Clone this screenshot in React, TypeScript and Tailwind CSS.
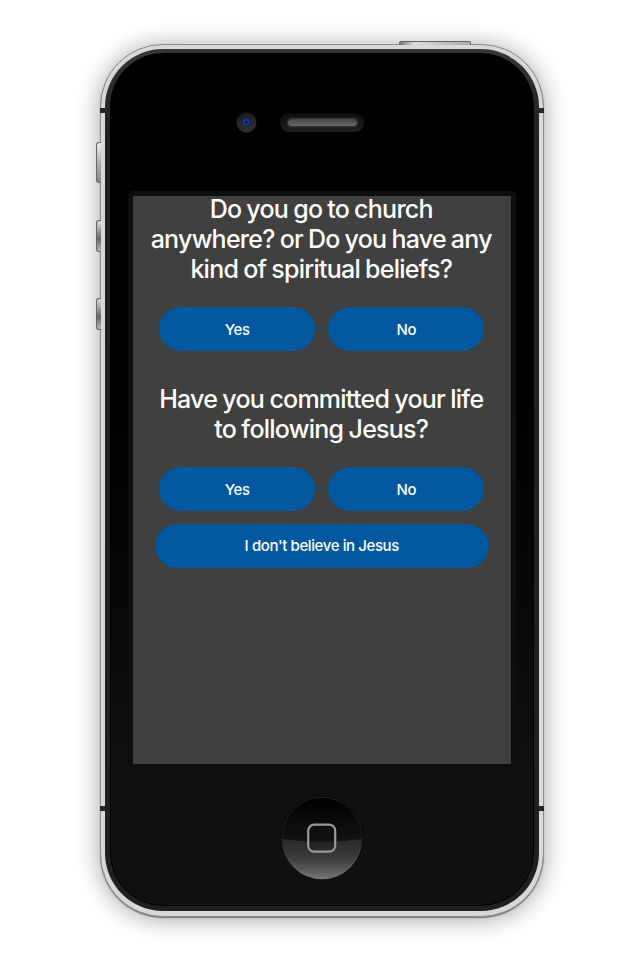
import type { ReactNode } from "react";

function PillButton({ children, className = "" }: { children: ReactNode; className?: string }) {
  return (
    <button
      className={`flex h-[44px] items-center justify-center rounded-full bg-[#00589f] pt-[2px] text-[15px] font-[450] tracking-[-0.4px] text-white ${className}`}
    >
      {children}
    </button>
  );
}

function Camera() {
  return (
    <svg className="mt-[-3px] size-[21px]" viewBox="0 0 21 21">
      <defs>
        <linearGradient id="lens" x1="0" y1="0" x2="0" y2="1">
          <stop offset="0" stopColor="#1b1c20" />
          <stop offset="1" stopColor="#303137" />
        </linearGradient>
        <radialGradient id="iris">
          <stop offset="0" stopColor="#0b3c93" />
          <stop offset="0.5" stopColor="#122a5a" />
          <stop offset="1" stopColor="#22252e" />
        </radialGradient>
      </defs>
      <circle cx="10.5" cy="10.5" r="10" fill="url(#lens)" />
      <circle cx="10" cy="10" r="5" fill="url(#iris)" />
      <circle cx="10" cy="10" r="2.6" fill="none" stroke="#0d3f8f" strokeWidth="1.2" />
      <circle cx="10" cy="10" r="1.1" fill="#050d20" />
      <circle cx="8.7" cy="8.8" r="0.6" fill="#2864b9" />
    </svg>
  );
}

function Speaker() {
  return (
    <div className="mt-[-2px] flex h-[19px] w-[84px] items-center justify-center rounded-full bg-linear-to-b from-[#0d0d0d] to-[#202020]">
      <div className="h-[7px] w-[69px] rounded-full bg-linear-to-b from-[#444] to-[#686868] shadow-[0_0_2px_1px_#3c3c3c]" />
    </div>
  );
}

function HomeButton() {
  return (
    <svg className="size-[84px]" viewBox="0 0 84 84">
      <defs>
        <linearGradient id="gloss" x1="0" y1="0" x2="0" y2="1">
          <stop offset="0" stopColor="#282828" />
          <stop offset="0.5" stopColor="#3d3d3d" />
          <stop offset="1" stopColor="#747474" />
        </linearGradient>
        <linearGradient id="dome" x1="0" y1="0" x2="0" y2="1">
          <stop offset="0" stopColor="#000" />
          <stop offset="0.6" stopColor="#141414" />
        </linearGradient>
        <linearGradient id="ring" x1="0" y1="0" x2="0" y2="1">
          <stop offset="0" stopColor="#2c2c2c" />
          <stop offset="0.5" stopColor="#222" />
          <stop offset="1" stopColor="#757575" />
        </linearGradient>
      </defs>
      <circle cx="42" cy="41.5" r="41.5" fill="#060606" />
      <circle cx="42" cy="41.5" r="40.2" fill="url(#dome)" />
      <path d="M1.8 43Q42 49 82.2 43A40.2 40.2 0 0 1 1.8 43Z" fill="url(#gloss)" />
      <circle cx="42" cy="41.5" r="40.2" fill="none" stroke="url(#ring)" strokeWidth="0.8" />
      <rect x="28.2" y="28.7" width="27" height="27" rx="6" fill="#101010" fillOpacity="0.3" stroke="#9a9a9a" strokeWidth="2.2" />
    </svg>
  );
}

function SideKey({ className }: { className: string }) {
  return (
    <div
      className={`absolute left-[-5px] w-[5px] rounded-l-[3px] border border-r-0 border-[#666] ${className}`}
    />
  );
}

function Screen() {
  return (
    <div className="flex h-[567.5px] w-[378px] flex-col items-center border border-[#3b3b3b] bg-[#404040] text-center text-white">
      <h1 className="mt-[-3px] mr-px text-[25px] leading-[30px] font-[450] tracking-[-0.75px] [word-spacing:-0.9px] whitespace-nowrap">
        Do you go to church
        <br />
        anywhere? or Do you have any
        <br />
        kind of spiritual beliefs?
      </h1>
      <div className="mt-[23px] flex gap-[13px]">
        <PillButton className="w-[156px]">Yes</PillButton>
        <PillButton className="w-[156px]">No</PillButton>
      </div>
      <h2 className="mt-[32.5px] mr-px text-[25px] leading-[30px] font-[450] tracking-[-0.75px] [word-spacing:-0.7px] whitespace-nowrap">
        Have you committed your life
        <br />
        to following Jesus?
      </h2>
      <div className="mt-[23.5px] flex gap-[13px]">
        <PillButton className="w-[156px]">Yes</PillButton>
        <PillButton className="w-[156px]">No</PillButton>
      </div>
      <PillButton className="mt-[12.5px] w-[334px]">I don't believe in Jesus</PillButton>
    </div>
  );
}

export default function App() {
  return (
    <main className="h-[960px] w-[640px] overflow-hidden bg-white pt-[44px] pl-[100px] font-['Inter','Liberation_Sans',sans-serif]">
      <div className="relative h-[873px] w-[443.5px] rounded-[63px] border border-[#8c8c8c] bg-[#d8d8d6] px-[4px] pt-[4px] pb-[5px] shadow-[0_1px_1px_#777,0_2px_24px_rgba(0,0,0,0.36)]">
        <div className="absolute top-[-4px] left-[298px] h-[4px] w-[72px] rounded-t-[2px] border border-b-0 border-[#666] bg-linear-to-r from-[#777] via-[#ddd] via-20% to-[#aaa]" />
        <SideKey className="top-[97px] h-[41px] bg-linear-to-b from-[#eee] via-[#b0b0b0] to-[#888]" />
        <SideKey className="top-[175px] h-[32px] bg-linear-to-b from-[#ddd] via-[#666] via-60% to-[#bbb]" />
        <SideKey className="top-[253px] h-[32px] bg-linear-to-b from-[#ddd] via-[#666] via-60% to-[#bbb]" />
        <div className="absolute top-[63px] left-[-1px] h-[5px] w-[443.5px] bg-[#252525]" />
        <div className="absolute top-[761px] left-[-1px] h-[5px] w-[443.5px] bg-[#252525]" />
        <div className="relative h-full rounded-[58px] bg-linear-to-b from-[#353835] via-[#202020] via-10% to-[#202020] px-[5px] pt-[4px] pb-[5px]">
          <div className="flex h-full flex-col items-center rounded-[53px] border border-black bg-linear-to-b from-black from-15% via-[#060606] via-60% to-[#101010] to-85%">
            <div className="mt-[59px] mr-[20.5px] flex h-[21px] items-center gap-[23px] self-end pr-[148px]">
              <Camera />
              <Speaker />
            </div>
            <div className="mt-[57px] rounded-[5px] bg-[#0e0e0e] p-[5px]">
              <Screen />
            </div>
            <div className="mt-[27px]">
              <HomeButton />
            </div>
          </div>
        </div>
      </div>
    </main>
  );
}
